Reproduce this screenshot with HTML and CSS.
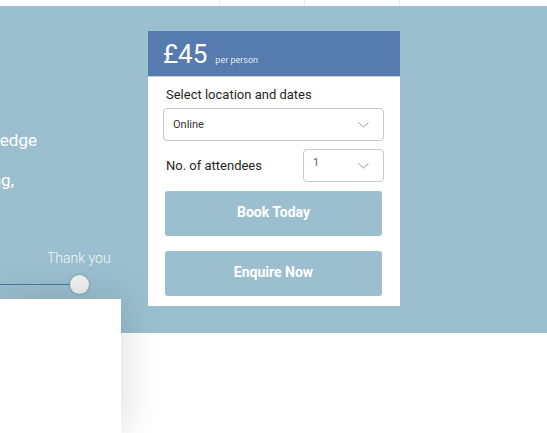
FILE: index.html
```html
<!DOCTYPE html>
<html lang="en">
<head>
<meta charset="utf-8">
<title>Course booking</title>
<link rel="stylesheet" href="styles.css">
</head>
<body>
<div class="topbar">
  <div class="topcell"></div>
  <div class="topcell"></div>
  <div class="topcell"></div>
  <div class="topcell"></div>
</div>
<section class="hero">
  <div class="hero-left">
    <div class="intro-line intro-line-1"><span>Gain the practical skills and knowledge</span></div>
    <div class="intro-line intro-line-2"><span>needed for effective training,</span></div>
    <div class="step-label">Thank you</div>
    <div class="slider">
      <div class="track"></div>
      <div class="knob"></div>
    </div>
  </div>
  <div class="card">
    <div class="card-head">
      <span class="price">£45</span>
      <span class="per">per person</span>
    </div>
    <div class="card-body">
      <div class="field-label">Select location and dates</div>
      <div class="select select-wide">
        <span>Online</span>
        <svg class="chev" width="11" height="6" viewBox="0 0 11 6"><path d="M0.5 0.5 L5.5 5 L10.5 0.5" fill="none" stroke="#9a9a9a" stroke-width="1"/></svg>
      </div>
      <div class="attendees">
        <div class="field-label">No. of attendees</div>
        <div class="select select-small">
          <span class="num">1</span>
          <svg class="chev" width="11" height="6" viewBox="0 0 11 6"><path d="M0.5 0.5 L5.5 5 L10.5 0.5" fill="none" stroke="#9a9a9a" stroke-width="1"/></svg>
        </div>
      </div>
      <button class="btn">Book Today</button>
      <button class="btn btn-second">Enquire Now</button>
    </div>
  </div>
</section>
<section class="below">
  <div class="panel"></div>
</section>
</body>
</html>
```
FILE: styles.css
```css
html, body {
  margin: 0;
  padding: 0;
  background: #ffffff;
  overflow: hidden;
}
body {
  font-family: Roboto, "Liberation Sans", Arial, sans-serif;
  width: 547px;
  height: 433px;
}
.topbar {
  height: 6px;
  display: grid;
  grid-template-columns: 219px 85px 95px 1fr;
  background: #ffffff;
}
.topcell + .topcell {
  border-left: 1px solid #ebebeb;
}
.hero {
  height: 327px;
  background: #9bbfcf;
  display: flex;
  align-items: flex-start;
}
.hero-left {
  width: 148px;
  flex: none;
  padding-top: 114px;
  color: #ffffff;
}
.intro-line {
  display: flex;
  justify-content: flex-end;
  font-size: 17px;
  line-height: 40px;
  white-space: nowrap;
}
.intro-line-1 { width: 37px; }
.intro-line-2 { width: 14px; }
.step-label {
  margin-top: 50px;
  padding-left: 47px;
  font-size: 14px;
  font-weight: 300;
  line-height: 16px;
  color: rgba(255, 255, 255, 0.88);
}
.slider {
  margin-top: 8px;
  height: 20px;
  display: flex;
  align-items: center;
}
.track {
  width: 70px;
  flex: none;
  height: 1px;
  background: #5272b4;
}
.knob {
  width: 19px;
  height: 19px;
  border-radius: 50%;
  background: #f1f1f2;
  box-shadow: 0 0 3px rgba(0, 0, 0, 0.25);
}
.card {
  width: 252px;
  margin-top: 25px;
  background: #ffffff;
}
.card-head {
  height: 37px;
  padding: 8px 0 0 15px;
  background: #567bae;
  border-bottom: 1px solid #c9ccd2;
  display: flex;
  align-items: baseline;
  color: #ffffff;
}
.price {
  font-size: 26px;
  line-height: 30px;
}
.per {
  margin-left: 8px;
  font-size: 9px;
  color: rgba(255, 255, 255, 0.85);
}
.card-body {
  padding: 10px 16px 10px 15px;
  display: flex;
  flex-direction: column;
}
.field-label {
  padding-left: 3px;
  font-size: 13px;
  line-height: 16px;
  color: #1f1f1f;
}
.select {
  box-sizing: border-box;
  height: 33px;
  border: 1px solid #c9c9c9;
  border-radius: 4px;
  display: flex;
  align-items: center;
  justify-content: space-between;
  padding: 0 14px 0 9px;
  font-size: 11px;
  color: #333333;
}
.select-wide {
  margin-top: 5px;
}
.select-small {
  width: 81px;
}
.num {
  color: #666666;
  margin-top: -6px;
}
.attendees {
  margin-top: 8px;
  display: flex;
  align-items: center;
  justify-content: space-between;
}
.btn {
  margin: 9px 2px 0;
  height: 45px;
  border: 0;
  border-radius: 3px;
  background: #9bbfcf;
  color: #ffffff;
  font-family: Roboto, "Liberation Sans", Arial, sans-serif;
  font-size: 14px;
  font-weight: 700;
  line-height: 16px;
  padding: 0 0 3px;
}
.btn-second {
  margin-top: 15px;
}
.below {
  display: flex;
}
.panel {
  position: relative;
  width: 121px;
  height: 134px;
  margin-top: -34px;
  background: #ffffff;
  box-shadow: 0 0 40px rgba(0, 0, 0, 0.16);
}
```
